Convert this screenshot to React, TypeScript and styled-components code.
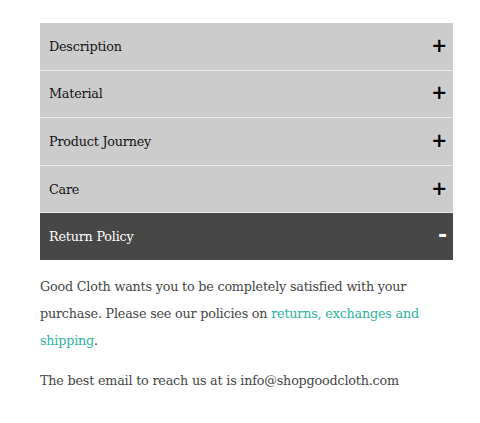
import styled, { createGlobalStyle } from "styled-components";

const GlobalStyle = createGlobalStyle`
  body {
    margin: 0;
    background: #fff;
    font-family: "DejaVu Serif", "Liberation Serif", serif;
  }
`;

const Page = styled.div`
  padding: 23px 27px 0 40px;
`;

const Accordion = styled.div`
  width: 413px;
`;

const Header = styled.div<{ $open?: boolean }>`
  display: flex;
  align-items: center;
  justify-content: space-between;
  height: 46.6px;
  padding: 0 6px 0 9px;
  background: ${(p) => (p.$open ? "#474747" : "#cccccc")};
  color: ${(p) => (p.$open ? "#fff" : "#111")};
  border-top: 1px solid #ececec;
  font-size: 12.75px;
  letter-spacing: -0.2px;

  &:first-child {
    border-top: none;
  }
`;

const Sign = styled.span<{ $open?: boolean }>`
  font-family: "DejaVu Sans", sans-serif;
  font-weight: 700;
  font-size: ${(p) => (p.$open ? "22px" : "19px")};
  line-height: 1;
  margin-top: ${(p) => (p.$open ? "-3px" : "-2px")};
  color: ${(p) => (p.$open ? "#fff" : "#000")};
`;

const Body = styled.div`
  padding-top: 13px;
  color: #444;
  font-size: 12.75px;
  letter-spacing: -0.2px;
`;

const Para = styled.p`
  margin: 0 0 13px;
  line-height: 27px;
`;

const Link = styled.a`
  color: #2bb3a0;
  text-decoration: none;
`;

const items = ["Description", "Material", "Product Journey", "Care"];

export default function App() {
  return (
    <Page>
      <GlobalStyle />
      <Accordion>
        {items.map((t) => (
          <Header key={t}>
            {t}
            <Sign>+</Sign>
          </Header>
        ))}
        <Header $open>
          Return Policy
          <Sign $open>-</Sign>
        </Header>
      </Accordion>
      <Body>
        <Para>
          Good Cloth wants you to be completely satisfied with your purchase.
          Please see our policies on{" "}
          <Link href="#">returns, exchanges and shipping</Link>.
        </Para>
        <Para>The best email to reach us at is info@shopgoodcloth.com</Para>
      </Body>
    </Page>
  );
}
